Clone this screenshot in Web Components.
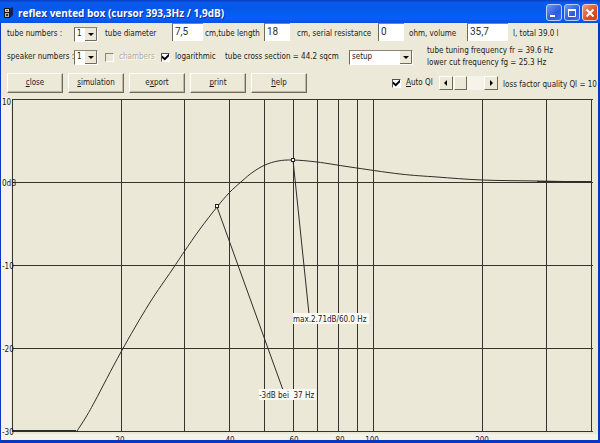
<!DOCTYPE html>
<html lang="en">
<head>
<meta charset="utf-8">
<title>reflex vented box</title>
<style>
html, body { margin: 0; }
body {
  --face: #ece9d8;
  --ink: #1c1b18;
  --shade: #8a8672;
  font: 8px/12px "DejaVu Sans Condensed", "Liberation Sans", Arial, sans-serif;
  color: var(--ink);
}
</style>
</head>
<body>
<vented-box-app></vented-box-app>
<script>
const define = (name, html, setup) => {
  const tpl = document.createElement('template');
  tpl.innerHTML = html;
  customElements.define(name, class extends HTMLElement {
    constructor() {
      super();
      this.attachShadow({ mode: 'open' }).append(tpl.content.cloneNode(true));
    }
    connectedCallback() { if (setup) setup(this, this.shadowRoot); }
  });
};

define('title-bar', `
<style>
:host { display: flex; align-items: center; height: 23px; padding: 2px 2px 0 4px; box-sizing: border-box;
  background: linear-gradient(#0a3fc4 0, #0a5cf0 3px, #0558e8 8px, #0560f8 18px, #0a52dc 100%); }
h1 { flex: 1; margin: 0 0 0 4px; color: #fff; white-space: nowrap;
  font: bold 10px/16px "Open Sans", "Noto Sans", sans-serif; text-shadow: 1px 1px #0a2e9a; }
.caps { display: flex; gap: 2px; }
button { width: 16px; height: 17px; padding: 0; border: 1px solid #b9cdf8; border-radius: 3px;
  background: linear-gradient(135deg, #6f95f5, #2a5be0 60%, #3b6df0); display: grid; place-items: center; }
button.x { background: linear-gradient(135deg, #ef9a7c, #dc4e26 60%, #cf4319); border-color: #f4cfc6; }
svg { display: block; }
</style>
<svg width="10" height="12" viewBox="0 0 10 12" aria-hidden="true">
  <path d="M5 2l4-2v8l-3 3z" fill="#12205c"/><rect x="0" y="1" width="6" height="10" fill="#15151c"/>
  <rect x="1" y="2" width="4" height="3" fill="#d9d3b4"/><rect x="1" y="6" width="4" height="4" fill="#b9b7a6"/>
  <rect x="2" y="3" width="2" height="1" fill="#55513f"/><rect x="2" y="7" width="2" height="2" fill="#3a3a38"/>
</svg>
<h1><slot></slot></h1>
<div class="caps">
  <button aria-label="Minimize"><svg width="12" height="12"><rect x="2" y="8" width="5" height="2" fill="#fff"/></svg></button>
  <button aria-label="Maximize"><svg width="12" height="12"><path d="M2.500 2.500h7v7h-7z" fill="none" stroke="#fff"/><path d="M2 3h8" stroke="#fff" stroke-width="2"/></svg></button>
  <button class="x" aria-label="Close"><svg width="12" height="12"><path d="M2.500 2.500l7 7M9.500 2.500l-7 7" stroke="#fff" stroke-width="2"/></svg></button>
</div>`);

define('text-field', `
<style>
:host { display: block; }
input { display: block; width: 100%; height: 18px; box-sizing: border-box; margin: 0; padding: 0 2px 2px; border: 0;
  border-left: 1px solid #6e6b5c; border-top: 1px solid var(--shade); border-radius: 0; background: #fff;
  color: #303030; font: 10px/14px Roboto, "Liberation Sans", sans-serif; outline: 0; }
</style>
<input>`, (el, root) => {
  const i = root.querySelector('input');
  i.value = el.getAttribute('value');
  i.setAttribute('aria-label', el.getAttribute('label'));
});

define('drop-down', `
<style>
:host { display: grid; height: 15px; box-sizing: border-box; border: 1px solid; border-color: var(--shade) #fff #fff #6e6b5c; background: #fff; }
select, svg { grid-area: 1 / 1; }
select { appearance: none; width: 100%; height: 13px; border: 0; border-radius: 0; margin: 0; padding: 0 0 0 2px;
  background: #fff; color: inherit; font: inherit; outline: 0; }
svg { justify-self: end; pointer-events: none; }
</style>
<select><option></option></select>
<svg width="12" height="13" aria-hidden="true"><rect width="12" height="13" fill="#ece9d8"/><path d="M0 12.500h11.500v-12.500" fill="none" stroke="#6e6b5c"/><path d="M3 5h6l-3 3z" fill="#000"/></svg>`,
(el, root) => {
  root.querySelector('option').textContent = el.getAttribute('value');
  root.querySelector('select').setAttribute('aria-label', el.getAttribute('label'));
});

define('check-box', `
<style>
:host { display: block; }
label { display: flex; align-items: center; gap: 5px; white-space: nowrap; }
input { appearance: none; flex: none; width: 9px; height: 9px; margin: 0; box-sizing: border-box; background: #fff;
  border: 1px solid; border-color: #55524a #fff #fff #55524a; display: grid; place-items: center; }
input:checked::before { content: ""; width: 7px; height: 7px; background: #000;
  clip-path: polygon(0 30%, 40% 62%, 100% 0, 100% 38%, 40% 100%, 0 65%); }
input:disabled { background: var(--face); border-color: var(--shade) #fff #fff var(--shade); }
input:disabled + span { color: #b0ad9c; text-shadow: 1px 1px #fff; }
::slotted(u) { text-decoration: underline 1px; text-underline-offset: 1px; text-decoration-skip-ink: none; }
</style>
<label><input type="checkbox"><span><slot></slot></span></label>`, (el, root) => {
  const i = root.querySelector('input');
  i.checked = el.hasAttribute('checked');
  i.disabled = el.hasAttribute('disabled');
});

define('push-button', `
<style>
:host { display: block; }
button { display: block; width: 56px; height: 20px; margin: 0; padding: 0; border: 1px solid; border-radius: 0;
  border-color: #fff #6e6b5c #6e6b5c #fff; box-shadow: inset -1px -1px #bdb9a4; background: var(--face); color: inherit; font: inherit; }
::slotted(u) { text-decoration: underline 1px; text-underline-offset: 1px; text-decoration-skip-ink: none; }
</style>
<button><slot></slot></button>`);

define('scroll-slider', `
<style>
:host { display: flex; width: 59px; height: 14px; background: #f5f3ea; }
button, input::-webkit-slider-thumb { box-sizing: border-box; border: 1px solid; border-color: #fff #6e6b5c #6e6b5c #fff; background: #ece9d8; }
button { flex: none; width: 14px; padding: 0; display: grid; place-items: center; }
input { appearance: none; flex: 1; min-width: 0; height: 14px; margin: 0; background: none; }
input::-webkit-slider-thumb { appearance: none; width: 13px; height: 14px; }
svg { display: block; }
</style>
<button aria-label="Decrease"><svg width="8" height="8"><path d="M5 1v6l-3-3z"/></svg></button>
<input type="range" min="0" max="100" value="5" aria-label="loss factor quality">
<button aria-label="Increase"><svg width="8" height="8"><path d="M3 1v6l3-3z"/></svg></button>`);

define('control-panel', `
<style>
:host { display: block; padding-left: 6px; white-space: nowrap; background: var(--face); }
.row { display: grid; align-items: center; }
.r1 { height: 22px; grid-template-columns: 67px 31px 67px 33px 59px 33px 81px 31px 58px 46px 1fr; }
.r1 text-field { align-self: start; }
.r2 { height: 24px; grid-template-columns: 67px 31px 56px 64px 124px 78px 1fr; }
.r3 { height: 28px; grid-template-columns: 385px 47px 64px 1fr; }
.buttons { display: flex; gap: 5px; }
.w26 { width: 26px; } .w31 { width: 31px; } .w41 { width: 41px; } .w24 { width: 24px; } .w64 { width: 64px; }
.low { padding-top: 4px; }
</style>
<div class="row r1">
  <span>tube numbers :</span><drop-down class="w24" value="1" label="tube numbers"></drop-down>
  <span>tube diameter</span><text-field class="w31" value="7,5" label="tube diameter"></text-field>
  <span>cm,tube length</span><text-field class="w26" value="18" label="tube length"></text-field>
  <span>cm, serial resistance</span><text-field class="w26" value="0" label="serial resistance"></text-field>
  <span>ohm, volume</span><text-field class="w41" value="35,7" label="volume"></text-field>
  <span>l, total 39.0 l</span>
</div>
<div class="row r2">
  <span>speaker numbers :</span><drop-down class="w24" value="1" label="speaker numbers"></drop-down>
  <check-box disabled>chambers</check-box><check-box checked>logarithmic</check-box>
  <span>tube cross section = 44.2 sqcm</span><drop-down class="w64" value="setup" label="setup"></drop-down>
  <div>tube tuning frequency fr = 39.6 Hz<br>lower cut frequency fg = 25.3 Hz</div>
</div>
<div class="row r3">
  <div class="buttons">
    <push-button><u>c</u>lose</push-button><push-button><u>s</u>imulation</push-button><push-button>e<u>x</u>port</push-button><push-button><u>p</u>rint</push-button><push-button><u>h</u>elp</push-button>
  </div>
  <check-box checked><u>A</u>uto Ql</check-box><scroll-slider></scroll-slider>
  <span class="low">loss factor quality Ql = 10</span>
</div>`);

define('response-chart', `
<style>
:host { display: block; background: #ebe8d8; }
svg { display: block; width: 100%; height: auto; }
.grid, .curve, .lead { fill: none; stroke: #34332e; }
.curve, .lead { stroke: #2e2d28; }
text { fill: #1c1b18; white-space: pre; }
.bg { fill: #f4f2e9; } .tag { fill: #fbfaf6; }
.mark { fill: #fff; stroke: #222; }
</style>
<svg viewBox="1 97 597 343" role="img" aria-label="Frequency response in dB">
  <rect class="bg" x="1" y="97" width="10" height="343"/>
  <rect class="bg" x="1" y="434" width="597" height="6"/>
  <g id="grid" class="grid" shape-rendering="crispEdges"></g>
  <path class="curve" id="response"/>
  <path class="curve" d="M12 430.500H76M537 181.500H591"/>
  <path class="lead" d="M217 207L283 390M293 160L309 314"/>
  <rect class="mark" x="215.500" y="204.500" width="3" height="3"/>
  <rect class="mark" x="291.500" y="158.500" width="3" height="3"/>
  <rect class="tag" x="293" y="313" width="76" height="11"/><text x="293" y="322">max.2.71dB/60.0 Hz</text>
  <rect class="tag" x="259" y="389" width="57" height="11"/><text x="259" y="398">-3dB bei  37 Hz</text>
  <text x="2" y="105">10</text><text x="2" y="186">0dB</text><text x="2" y="269">-10</text><text x="2" y="352">-20</text><text x="2" y="435">-30</text>
  <g text-anchor="middle">
    <text x="120" y="443">20</text><text x="230" y="443">40</text><text x="294" y="443">60</text><text x="340" y="443">80</text><text x="372" y="443">100</text><text x="482" y="443">200</text>
  </g>
</svg>`, (el, root) => {
  const xs = [12, 121, 184, 229, 264, 293, 317, 338, 357, 373, 482, 546, 591];
  const ys = [99, 182, 265, 348, 431];
  const path = document.createElementNS('http://www.w3.org/2000/svg', 'path');
  path.setAttribute('d', xs.map(x => `M${x + .5} 99V432`).join('') + ys.map(y => `M12 ${y + .5}H593`).join(''));
  root.getElementById('grid').append(path);

  // Response curve: [x, y] samples joined by Catmull-Rom segments.
  const p = [[77, 431], [86, 417], [95, 401], [121, 352], [149, 304], [172, 270], [184, 252], [200, 229], [217, 207],
    [229, 193], [242, 181], [253, 172], [265, 165], [278, 161], [293, 160], [317, 162], [350, 167], [400, 174], [437, 177], [482, 180], [537, 181], [591, 182]];
  let d = `M12 431.5H${p[0][0]}L${p[0]}`;
  for (let i = 0; i < p.length - 1; i++) {
    const a = p[i - 1] || p[i], b = p[i], c = p[i + 1], e = p[i + 2] || c;
    d += `C${b[0] + (c[0] - a[0]) / 6} ${b[1] + (c[1] - a[1]) / 6} ${c[0] - (e[0] - b[0]) / 6} ${c[1] - (e[1] - b[1]) / 6} ${c}`;
  }
  root.getElementById('response').setAttribute('d', d);
});

define('vented-box-app', `
<style>
:host { display: flex; flex-direction: column; min-height: 100vh; box-sizing: border-box; background: var(--face);
  border: solid #0a37c0; border-width: 0 2px 3px 1px; }
title-bar { margin: 0 -2px 0 -1px; }
</style>
<title-bar>reflex vented box (cursor 393,3Hz / 1,9dB)</title-bar>
<control-panel></control-panel>
<response-chart></response-chart>`);
</script>
</body>
</html>
